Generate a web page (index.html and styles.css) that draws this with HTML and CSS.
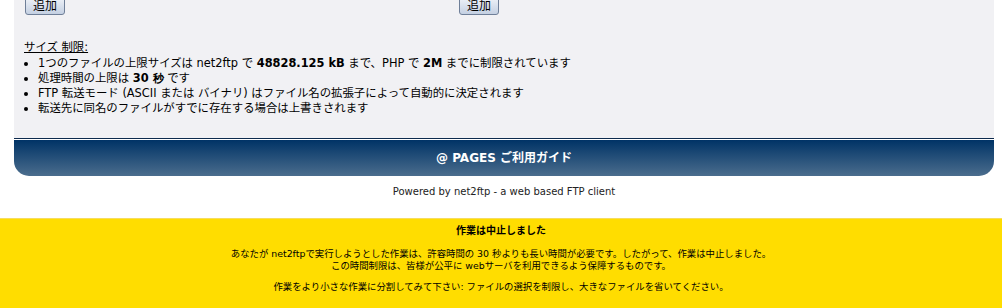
FILE: index.html
```html
<!DOCTYPE html>
<html lang="ja">
<head>
    <meta charset="UTF-8">
    <title>net2ftp - アップロード</title>
    <link rel="stylesheet" href="styles.css">
</head>
<body>
    <!-- Upload panel -->
    <div class="container">
        <div class="panel">
            <div class="button-row">
                <div class="button-col"><button class="btn" type="button">追加</button></div>
                <div class="button-col"><button class="btn" type="button">追加</button></div>
            </div>

            <div class="limits">
                <div class="limits-title">サイズ 制限:</div>
                <ul class="limits-list">
                    <li>1つのファイルの上限サイズは <span class="latin">net2ftp</span> で <b class="latin">48828.125 kB</b> まで、<span class="latin">PHP</span> で <b class="latin">2M</b> までに制限されています</li>
                    <li>処理時間の上限は <b class="latin">30 秒</b> です</li>
                    <li><span class="latin">FTP</span> 転送モード (<span class="latin">ASCII</span> または バイナリ) はファイル名の拡張子によって自動的に決定されます</li>
                    <li>転送先に同名のファイルがすでに存在する場合は上書きされます</li>
                </ul>
            </div>
        </div>

        <!-- Footer bar -->
        <div class="guide-bar">@ PAGES ご利用ガイド</div>
        <div class="powered">Powered by net2ftp - a web based FTP client</div>
    </div>

    <!-- Timeout message -->
    <div class="notice">
        <div class="notice-title">作業は中止しました</div>
        <p>あなたが <span class="latin">net2ftp</span>で実行しようとした作業は、許容時間の <span class="latin">30</span> 秒よりも長い時間が必要です。したがって、作業は中止しました。<br>
        この時間制限は、皆様が公平に <span class="latin">web</span>サーバを利用できるよう保障するものです。</p>
        <p>作業をより小さな作業に分割してみて下さい: ファイルの選択を制限し、大きなファイルを省いてください。</p>
    </div>
</body>
</html>
```

FILE: styles.css
```css
/* Base */
* {
    box-sizing: border-box;
}

body {
    margin: 0;
    background-color: #ffffff;
    color: #000000;
    font-family: "DejaVu Sans", Verdana, "Noto Sans CJK JP", sans-serif;
    font-size: 12px;
    overflow: hidden;
}

.latin {
    font-family: "DejaVu Sans", Verdana, sans-serif;
}

/* Main container */
.container {
    margin-left: 14px;
    width: 980px;
}

.panel {
    background-color: #f1f1f4;
    padding: 0 10px 22px 10px;
    border-bottom: 1px solid #0d2a4d;
}

.button-row {
    display: flex;
    margin-top: -6px;
}

.button-col {
    width: 434px;
    padding-left: 1px;
}

.btn {
    width: 40px;
    height: 21px;
    padding: 0;
    font-family: "Noto Sans CJK JP", sans-serif;
    font-size: 12px;
    color: #000;
    background: linear-gradient(#f6f8fc, #c4d0e2);
    border: 1px solid #6f7f98;
    border-radius: 3px;
}

/* Size limits */
.limits {
    margin-top: 25px;
    font-size: 11.4px;
    line-height: 15px;
}

.limits-title {
    text-decoration: underline;
}

.limits-list {
    margin: 1px 0 0 0;
    padding-left: 14px;
}

/* Guide bar */
.guide-bar {
    margin-top: 1px;
    height: 36px;
    line-height: 36px;
    text-align: center;
    color: #ffffff;
    font-weight: bold;
    font-size: 12px;
    background: linear-gradient(#003366, #4b6d8d);
    border-radius: 0 0 15px 15px;
}

.powered {
    padding-top: 10px;
    height: 42px;
    text-align: center;
    font-size: 10px;
    color: #222;
}

/* Timeout notice */
.notice {
    background-color: #ffdd00;
    border-top: 1px solid #f6dc60;
    padding: 6px 0 20px 0;
    text-align: center;
    font-size: 9.4px;
    line-height: 12px;
}

.notice-title {
    font-weight: bold;
    font-size: 10px;
    margin-bottom: 11px;
}

.notice p {
    margin: 0 0 9px 0;
}
```
